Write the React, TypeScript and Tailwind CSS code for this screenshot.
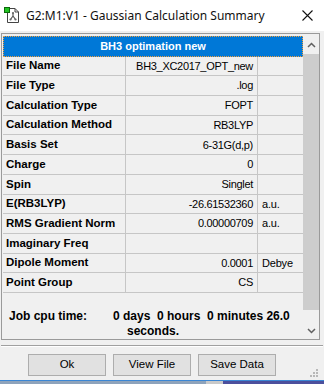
import React from "react";

const rows: { label: string; value: string; unit?: string }[] = [
  { label: "File Name", value: "BH3_XC2017_OPT_new" },
  { label: "File Type", value: ".log" },
  { label: "Calculation Type", value: "FOPT" },
  { label: "Calculation Method", value: "RB3LYP" },
  { label: "Basis Set", value: "6-31G(d,p)" },
  { label: "Charge", value: "0" },
  { label: "Spin", value: "Singlet" },
  { label: "E(RB3LYP)", value: "-26.61532360", unit: "a.u." },
  { label: "RMS Gradient Norm", value: "0.00000709", unit: "a.u." },
  { label: "Imaginary Freq", value: "" },
  { label: "Dipole Moment", value: "0.0001", unit: "Debye" },
  { label: "Point Group", value: "CS" },
];

function AppIcon() {
  return (
    <svg width="17" height="17" viewBox="0 0 17 17" className="shrink-0">
      <path d="M3.5 1.5 H11 L14.5 5 V15.5 H3.5 Z" fill="#fff" stroke="#444" />
      <path d="M11 1.5 V5 H14.5" fill="none" stroke="#444" />
      <rect x="0.5" y="0.5" width="5" height="5" fill="#22c422" stroke="#0a6a0a" />
      <path d="M9 6 V9 M9 9 L6.5 12.5 M9 9 L11.5 12.5" stroke="#555" strokeWidth="1.2" fill="none" />
      <circle cx="9" cy="6" r="1.1" fill="#666" />
      <circle cx="6.5" cy="12.5" r="1.1" fill="#666" />
      <circle cx="11.5" cy="12.5" r="1.1" fill="#666" />
    </svg>
  );
}

function Chevron({ up }: { up?: boolean }) {
  return (
    <svg width="9" height="6" viewBox="0 0 9 6">
      <path
        d={up ? "M1 5 L4.5 1.5 L8 5" : "M1 1 L4.5 4.5 L8 1"}
        fill="none"
        stroke="#606060"
        strokeWidth="1.5"
      />
    </svg>
  );
}

function Grip() {
  const dots = [
    [6, 0],
    [3, 3],
    [6, 3],
    [0, 6],
    [3, 6],
    [6, 6],
  ];
  return (
    <svg width="8" height="8" viewBox="0 0 8 8">
      {dots.map(([x, y], i) => (
        <rect key={i} x={x} y={y} width="2" height="2" fill="#b8b8b8" />
      ))}
    </svg>
  );
}

export default function App() {
  return (
    <div className="w-[324px] h-[384px] bg-[#f0f0f0] flex flex-col overflow-hidden font-['Liberation_Sans',Arial,sans-serif] text-black">
      {/* title bar */}
      <div className="h-[31px] bg-white flex items-center shrink-0">
        <div className="ml-[4px]">
          <AppIcon />
        </div>
        <span className="ml-[5px] text-[12px] font-['Noto_Sans',sans-serif] text-[#111]">
          G2:M1:V1 - Gaussian Calculation Summary
        </span>
        <svg width="11" height="11" viewBox="0 0 11 11" className="ml-auto mr-[11px]">
          <path d="M0.5 0.5 L10.5 10.5 M10.5 0.5 L0.5 10.5" stroke="#111" strokeWidth="1.1" />
        </svg>
      </div>

      {/* table box */}
      <div className="mt-[2px] ml-[1px] w-[319px] h-[307px] border border-[#9a9a9a] flex shrink-0">
        <div className="flex-1 pt-[2px] pl-[1px] flex flex-col">
          <div className="h-[21px] bg-[#0078d7] border border-dotted border-[#f0a040] flex items-center justify-center text-white font-bold text-[11px]">
            BH3 optimation new
          </div>
          {rows.map((r) => (
            <div key={r.label} className="h-[20px] flex border-b border-[#c6c6c6] text-[11px]">
              <div className="w-[123px] border-r border-[#c6c6c6] pl-[3px] flex items-center font-bold text-[11.5px]">
                {r.label}
              </div>
              <div className="w-[132px] border-r border-[#c6c6c6] pr-[4px] flex items-center justify-end tracking-[-0.3px]">
                {r.value}
              </div>
              <div className="flex-1 pl-[4px] flex items-center tracking-[-0.2px]">{r.unit}</div>
            </div>
          ))}
          <div className="pt-[16px] font-bold text-[12px] leading-[15px]">
            <div className="flex">
              <span className="w-[110px] pl-[6px]">Job cpu time:</span>
              <span className="whitespace-pre">0 days  0 hours  0 minutes 26.0</span>
            </div>
            <div className="text-center">seconds.</div>
          </div>
        </div>
        {/* scrollbar */}
        <div className="w-[16px] flex flex-col">
          <div className="h-[20px] flex items-center justify-center pt-[2px]">
            <Chevron up />
          </div>
          <div className="h-[256px] bg-[#cdcdcd]" />
          <div className="flex-1" />
          <div className="h-[17px] flex items-center justify-center">
            <Chevron />
          </div>
        </div>
      </div>

      {/* separator */}
      <div className="mt-[5px] mx-[1px] h-[2px] border-t border-[#a0a0a0] border-b border-b-white shrink-0" />

      {/* buttons */}
      <div className="mt-[7px] flex items-start shrink-0">
        <div className="ml-[28px] flex gap-[7px]">
          {["Ok", "View File", "Save Data"].map((b) => (
            <button
              key={b}
              className="w-[78px] h-[22px] bg-[#e1e1e1] border border-[#adadad] text-[11.5px] text-black flex items-center justify-center"
            >
              {b}
            </button>
          ))}
        </div>
        <div className="ml-auto mr-[6px] mt-[15px]">
          <Grip />
        </div>
      </div>

      {/* bottom edge */}
      <div className="mt-auto shrink-0">
        <div className="h-[1px] bg-[#3a86d4]" />
        <div className="h-[3px] flex">
          <div className="w-[206px] bg-[#8ea3bb]" />
          <div className="w-[17px] bg-[#c9c9c9]" />
          <div className="flex-1 bg-[#4c4f9c]" />
        </div>
      </div>
    </div>
  );
}
